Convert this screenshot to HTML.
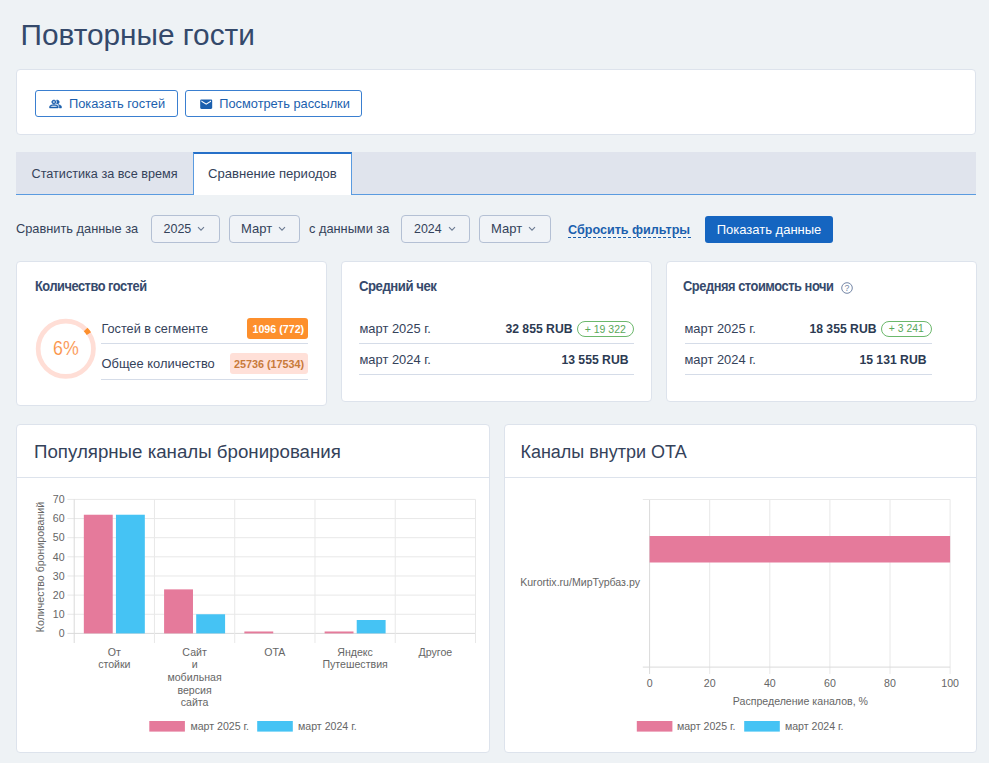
<!DOCTYPE html>
<html lang="ru">
<head>
<meta charset="utf-8">
<title>Повторные гости</title>
<style>
*{box-sizing:border-box;margin:0;padding:0}
html,body{width:989px;height:763px;overflow:hidden}
body{background:#eef2f5;font-family:"Liberation Sans",sans-serif;color:#34425a;position:relative}
.abs{position:absolute;white-space:nowrap}
.card{position:absolute;background:#fff;border:1px solid #dde3ec;border-radius:4px}
h1{position:absolute;left:20.5px;top:17px;font-size:29.8px;font-weight:400;color:#34496b;line-height:36px;white-space:nowrap}
.btn-o{position:absolute;top:90px;height:27px;border:1px solid #3a7fd0;border-radius:3px;background:#fff;color:#1b5fae;font-size:13px;line-height:25px;white-space:nowrap}
.btn-o span{position:absolute;top:0}
.tabs{position:absolute;left:16px;top:152px;width:960px;height:43px;background:#e0e4ed;border-bottom:1px solid #5a9be0}
.tab{position:absolute;top:0;height:42px;font-size:13px;line-height:44px;color:#34425a;white-space:nowrap}
.tab.act{left:177px;width:159px;background:#fff;border:1px solid #5a9be0;border-top:2px solid #2670c8;border-bottom:none;height:43px;line-height:42px}
.flt{position:absolute;top:215px;height:28px;font-size:13.5px;line-height:28px;color:#34425a;white-space:nowrap}
.sel{position:absolute;top:215px;height:28px;border:1px solid #b4c0d4;border-radius:4px;background:#f0f3f7;font-size:13.5px;line-height:26px;color:#34425a}
.sel span{position:absolute;top:0}
.sel svg{position:absolute;top:10px}
.sc-t{position:absolute;font-size:14px;font-weight:700;letter-spacing:-0.5px;transform-origin:0 50%;color:#364a6c;white-space:nowrap}
.row-l{position:absolute;font-size:13.5px;color:#34425a;white-space:nowrap}
.row-v{position:absolute;font-size:13px;font-weight:700;color:#2c3a52;white-space:nowrap}
.hr{position:absolute;height:1px;background:#d5dce8}
.pill{position:absolute;height:16px;border:1px solid #6cb86c;border-radius:8px;color:#5aa85a;font-size:11.5px;line-height:14px;text-align:center;white-space:nowrap}
.badge{position:absolute;height:21px;border-radius:3px;font-size:11px;font-weight:700;line-height:22px;text-align:center;white-space:nowrap}
.ch-t{position:absolute;left:17px;top:15px;font-size:18px;color:#34425a;line-height:24px;white-space:nowrap}
.ch-hr{position:absolute;left:0;right:0;top:52px;height:1px;background:#dde3ec}
svg text{font-family:"Liberation Sans",sans-serif}
</style>
</head>
<body>
<h1>Повторные гости</h1>

<!-- action card -->
<div class="card" style="left:16px;top:69px;width:960px;height:66px"></div>
<div class="btn-o" style="left:35px;width:143px">
  <svg class="abs" style="left:13.4px;top:6.9px" width="13" height="12" viewBox="0 0 24 24" preserveAspectRatio="none"><path fill="#1b5fae" stroke="#1b5fae" stroke-width="0.9" d="M16.67 13.13C18.04 14.06 19 15.32 19 17v3h4v-3c0-2.18-3.57-3.47-6.33-3.87zM15 12c2.21 0 4-1.79 4-4s-1.79-4-4-4c-.47 0-.91.1-1.33.24C14.5 5.27 15 6.58 15 8s-.5 2.73-1.33 3.76c.42.14.86.24 1.33.24zM9 12c2.21 0 4-1.79 4-4s-1.79-4-4-4-4 1.79-4 4 1.79 4 4 4zm0-6c1.1 0 2 .9 2 2s-.9 2-2 2-2-.9-2-2 .9-2 2-2zm0 7c-2.67 0-8 1.34-8 4v3h16v-3c0-2.66-5.33-4-8-4zm6 5H3v-.99C3.2 16.29 6.3 15 9 15s5.8 1.29 6 2v1z"/></svg>
  <span style="left:33px;font-size:12.85px">Показать гостей</span>
</div>
<div class="btn-o" style="left:185px;width:177px">
  <svg class="abs" style="left:12.6px;top:6.1px" width="14.4" height="14.4" viewBox="0 0 24 24"><path fill="#1b5fae" d="M20 4H4c-1.1 0-1.99.9-1.99 2L2 18c0 1.1.9 2 2 2h16c1.100 0 2-.9 2-2V6c0-1.100-.9-2-2-2zm0 4l-8 5-8-5V6l8 5 8-5v2z"/></svg>
  <span style="left:33.3px;font-size:12.8px">Посмотреть рассылки</span>
</div>

<!-- tabs -->
<div class="tabs">
  <div class="tab" style="left:15.5px;font-size:12.65px">Статистика за все время</div>
  <div class="tab act"><span style="position:absolute;left:14px;top:-1px;font-size:13.1px">Сравнение периодов</span></div>
</div>

<!-- filter row -->
<div class="flt" style="left:16px;font-size:12.8px">Сравнить данные за</div>
<div class="sel" style="left:151px;width:69px"><span style="left:11.5px;font-size:12.5px">2025</span><svg style="left:45.4px" width="8" height="6" viewBox="0 0 8 6"><path d="M1 1.2 L4 4.2 L7 1.2" fill="none" stroke="#6b7a92" stroke-width="1.1"/></svg></div>
<div class="sel" style="left:229px;width:71px"><span style="left:11px;font-size:13px">Март</span><svg style="left:48.2px" width="8" height="6" viewBox="0 0 8 6"><path d="M1 1.2 L4 4.2 L7 1.2" fill="none" stroke="#6b7a92" stroke-width="1.1"/></svg></div>
<div class="flt" style="left:309px;font-size:12.8px">с данными за</div>
<div class="sel" style="left:401px;width:69px"><span style="left:12px;font-size:12.4px">2024</span><svg style="left:45.8px" width="8" height="6" viewBox="0 0 8 6"><path d="M1 1.2 L4 4.2 L7 1.2" fill="none" stroke="#6b7a92" stroke-width="1.1"/></svg></div>
<div class="sel" style="left:479px;width:72px"><span style="left:11px;font-size:13px">Март</span><svg style="left:48.2px" width="8" height="6" viewBox="0 0 8 6"><path d="M1 1.2 L4 4.2 L7 1.2" fill="none" stroke="#6b7a92" stroke-width="1.1"/></svg></div>
<div class="flt" style="left:568px;top:215.6px;font-weight:700;color:#1b5fae;font-size:12.6px">Сбросить фильтры</div>
<div class="abs" style="left:568px;top:237px;width:122.5px;height:0;border-top:1px dashed #1b5fae"></div>
<div class="abs" style="left:705px;top:216px;width:128px;height:27px;background:#1565c0;border-radius:3px;color:#fff;font-size:13px;line-height:27px;text-align:center">Показать данные</div>

<!-- stat card 1 -->
<div class="card" style="left:16px;top:261px;width:311px;height:145px"></div>
<div class="sc-t" style="left:35.2px;top:278px;transform:scaleX(0.914)">Количество гостей</div>
<svg class="abs" style="left:33px;top:316px" width="66" height="66" viewBox="0 0 66 66">
  <circle cx="32.80" cy="32.80" r="27.65" fill="none" stroke="#ffded6" stroke-width="4.7"/>
  <path d="M52.62 13.52 A27.65 27.65 0 0 1 55.88 17.58" fill="none" stroke="#fd8f2c" stroke-width="5.2"/>
</svg>
<div class="abs" style="left:52.9px;top:335.5px;font-size:20px;color:#fb8c3c;line-height:24px;transform:scaleX(0.89);transform-origin:0 50%;-webkit-text-stroke:0.2px #fff">6%</div>
<div class="row-l" style="left:101.5px;top:322px;font-size:12.7px">Гостей в сегменте</div>
<div class="badge" style="left:247px;top:318px;width:61px;background:#fd8f2c;color:#fff;font-size:10.7px;padding-left:1.6px">1096 (772)</div>
<div class="hr" style="left:101px;top:343px;width:207px"></div>
<div class="row-l" style="left:101.5px;top:356px;font-size:12.9px">Общее количество</div>
<div class="badge" style="left:230px;top:353px;width:78px;background:#ffe0d8;color:#c87a3a;font-size:10.8px">25736 (17534)</div>
<div class="hr" style="left:101px;top:379px;width:207px"></div>

<!-- stat card 2 -->
<div class="card" style="left:341px;top:261px;width:311px;height:141px"></div>
<div class="sc-t" style="left:358.8px;top:278px;transform:scaleX(0.94)">Средний чек</div>
<div class="row-l" style="left:359.5px;top:321px;font-size:12.9px">март 2025 г.</div>
<div class="row-v" style="right:416.5px;top:322px;font-size:12.2px">32 855 RUB</div>
<div class="pill" style="left:577px;top:320.6px;width:56.5px;font-size:10.5px">+ 19 322</div>
<div class="hr" style="left:359px;top:343px;width:274.5px"></div>
<div class="row-l" style="left:359.5px;top:352px;font-size:12.9px">март 2024 г.</div>
<div class="row-v" style="right:360.5px;top:353px;font-size:12.2px">13 555 RUB</div>
<div class="hr" style="left:359px;top:374px;width:274.5px"></div>

<!-- stat card 3 -->
<div class="card" style="left:666px;top:261px;width:311px;height:141px"></div>
<div class="sc-t" style="left:683.4px;top:278px;transform:scaleX(0.919)">Средняя стоимость ночи</div>
<svg class="abs" style="left:839.8px;top:280.7px" width="14" height="14" viewBox="0 0 14 14"><circle cx="7" cy="7" r="5.3" fill="none" stroke="#7486a6" stroke-width="1"/><text x="7" y="10.1" font-size="8.8" text-anchor="middle" fill="#7486a6">?</text></svg>
<div class="row-l" style="left:684.5px;top:321px;font-size:12.9px">март 2025 г.</div>
<div class="row-v" style="right:112.5px;top:322px;font-size:12.2px">18 355 RUB</div>
<div class="pill" style="left:881px;top:320.6px;width:50.5px;font-size:10.4px">+ 3 241</div>
<div class="hr" style="left:684.5px;top:343px;width:247px"></div>
<div class="row-l" style="left:684.5px;top:352px;font-size:12.9px">март 2024 г.</div>
<div class="row-v" style="right:62.5px;top:353px;font-size:12.2px">15 131 RUB</div>
<div class="hr" style="left:684.5px;top:374px;width:247px"></div>

<!-- chart card left -->
<div class="card" style="left:16px;top:424px;width:474px;height:329px">
  <div class="ch-t" style="font-size:18.7px">Популярные каналы бронирования</div>
  <div class="ch-hr"></div>
</div>

<!-- chart card right -->
<div class="card" style="left:504px;top:424px;width:473px;height:329px">
  <div class="ch-t" style="left:15.4px">Каналы внутри OTA</div>
  <div class="ch-hr"></div>
</div>

<!--CHARTS-->
<svg class="abs" style="left:0;top:0" width="989" height="763" viewBox="0 0 989 763" font-size="10.6" fill="#666">
<line x1="67.4" y1="633.40" x2="475.5" y2="633.40" stroke="#dadada" stroke-width="1"/>
<text x="64.6" y="637.10" text-anchor="end">0</text>
<line x1="67.4" y1="614.26" x2="475.5" y2="614.26" stroke="#e8e8e8" stroke-width="1"/>
<text x="64.6" y="617.96" text-anchor="end">10</text>
<line x1="67.4" y1="595.12" x2="475.5" y2="595.12" stroke="#e8e8e8" stroke-width="1"/>
<text x="64.6" y="598.82" text-anchor="end">20</text>
<line x1="67.4" y1="575.98" x2="475.5" y2="575.98" stroke="#e8e8e8" stroke-width="1"/>
<text x="64.6" y="579.68" text-anchor="end">30</text>
<line x1="67.4" y1="556.84" x2="475.5" y2="556.84" stroke="#e8e8e8" stroke-width="1"/>
<text x="64.6" y="560.54" text-anchor="end">40</text>
<line x1="67.4" y1="537.70" x2="475.5" y2="537.70" stroke="#e8e8e8" stroke-width="1"/>
<text x="64.6" y="541.40" text-anchor="end">50</text>
<line x1="67.4" y1="518.56" x2="475.5" y2="518.56" stroke="#e8e8e8" stroke-width="1"/>
<text x="64.6" y="522.26" text-anchor="end">60</text>
<line x1="67.4" y1="499.42" x2="475.5" y2="499.42" stroke="#e8e8e8" stroke-width="1"/>
<text x="64.6" y="503.12" text-anchor="end">70</text>
<line x1="74.20" y1="499.4" x2="74.20" y2="643" stroke="#dadada" stroke-width="1"/>
<line x1="154.46" y1="499.4" x2="154.46" y2="643" stroke="#e8e8e8" stroke-width="1"/>
<line x1="234.72" y1="499.4" x2="234.72" y2="643" stroke="#e8e8e8" stroke-width="1"/>
<line x1="314.98" y1="499.4" x2="314.98" y2="643" stroke="#e8e8e8" stroke-width="1"/>
<line x1="395.24" y1="499.4" x2="395.24" y2="643" stroke="#e8e8e8" stroke-width="1"/>
<line x1="475.50" y1="499.4" x2="475.50" y2="643" stroke="#e8e8e8" stroke-width="1"/>
<rect x="83.83" y="514.73" width="28.89" height="118.67" fill="#e57a9b"/>
<rect x="115.94" y="514.73" width="28.89" height="118.67" fill="#45c3f4"/>
<rect x="164.09" y="589.38" width="28.89" height="44.02" fill="#e57a9b"/>
<rect x="196.20" y="614.26" width="28.89" height="19.14" fill="#45c3f4"/>
<rect x="244.35" y="631.49" width="28.89" height="1.91" fill="#e57a9b"/>
<rect x="324.61" y="631.49" width="28.89" height="1.91" fill="#e57a9b"/>
<rect x="356.72" y="620.00" width="28.89" height="13.40" fill="#45c3f4"/>
<text x="114.33" y="655.50" text-anchor="middle">От</text>
<text x="114.33" y="668.22" text-anchor="middle">стойки</text>
<text x="194.59" y="655.50" text-anchor="middle">Сайт</text>
<text x="194.59" y="668.22" text-anchor="middle">и</text>
<text x="194.59" y="680.94" text-anchor="middle">мобильная</text>
<text x="194.59" y="693.66" text-anchor="middle">версия</text>
<text x="194.59" y="706.38" text-anchor="middle">сайта</text>
<text x="274.85" y="655.50" text-anchor="middle">OTA</text>
<text x="355.11" y="655.50" text-anchor="middle">Яндекс</text>
<text x="355.11" y="668.22" text-anchor="middle">Путешествия</text>
<text x="435.37" y="655.50" text-anchor="middle">Другое</text>
<text transform="translate(43.6 567) rotate(-90)" text-anchor="middle">Количество бронирований</text>
<rect x="149.3" y="721" width="35.6" height="10.6" fill="#e57a9b"/>
<text x="190.4" y="729.5">март 2025 г.</text>
<rect x="257.2" y="721" width="35.6" height="10.6" fill="#45c3f4"/>
<text x="298" y="729.5">март 2024 г.</text>
<line x1="649.60" y1="499.5" x2="649.60" y2="674" stroke="#dadada" stroke-width="1"/>
<text x="649.60" y="686.5" text-anchor="middle">0</text>
<line x1="709.70" y1="499.5" x2="709.70" y2="674" stroke="#e8e8e8" stroke-width="1"/>
<text x="709.70" y="686.5" text-anchor="middle">20</text>
<line x1="769.80" y1="499.5" x2="769.80" y2="674" stroke="#e8e8e8" stroke-width="1"/>
<text x="769.80" y="686.5" text-anchor="middle">40</text>
<line x1="829.90" y1="499.5" x2="829.90" y2="674" stroke="#e8e8e8" stroke-width="1"/>
<text x="829.90" y="686.5" text-anchor="middle">60</text>
<line x1="890.00" y1="499.5" x2="890.00" y2="674" stroke="#e8e8e8" stroke-width="1"/>
<text x="890.00" y="686.5" text-anchor="middle">80</text>
<line x1="950.10" y1="499.5" x2="950.10" y2="674" stroke="#e8e8e8" stroke-width="1"/>
<text x="950.10" y="686.5" text-anchor="middle">100</text>
<line x1="642.8" y1="499.5" x2="950.1" y2="499.5" stroke="#e8e8e8" stroke-width="1"/>
<line x1="642.8" y1="667.1" x2="950.1" y2="667.1" stroke="#dadada" stroke-width="1"/>
<rect x="649.6" y="536" width="300.50" height="26.5" fill="#e57a9b"/>
<text x="640" y="585.6" text-anchor="end">Kurortix.ru/МирТурбаз.ру</text>
<text x="800.4" y="704.5" text-anchor="middle">Распределение каналов, %</text>
<rect x="636.8" y="721" width="35.6" height="10.6" fill="#e57a9b"/>
<text x="676.9" y="729.5">март 2025 г.</text>
<rect x="744.2" y="721" width="35.6" height="10.6" fill="#45c3f4"/>
<text x="784.9" y="729.5">март 2024 г.</text>
</svg>
<!--/CHARTS-->
</body>
</html>
